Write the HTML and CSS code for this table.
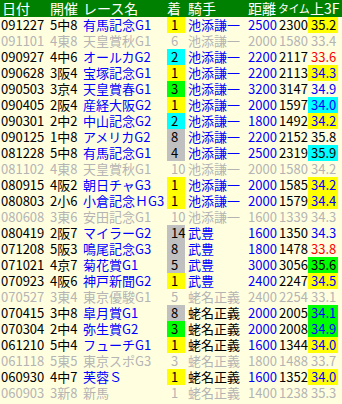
FILE: index.html
```html
<!DOCTYPE html>
<html lang="ja">
<head>
<meta charset="utf-8">
<link rel="stylesheet" href="styles.css">
</head>
<body>
<table class="results">
<colgroup>
<col class="c-date"><col class="c-kai"><col class="c-race"><col class="c-pos"><col class="c-jky"><col class="c-dist"><col class="c-time"><col class="c-f3"><col class="c-pad">
</colgroup>
<thead>
<tr><th class="t-date">日付</th><th class="t-kai">開催</th><th class="t-race">レース名</th><th class="t-pos">着</th><th class="t-jky">騎手</th><th class="t-dist">距離</th><th class="t-time">タイム</th><th class="t-f3">上3F</th><th></th></tr>
</thead>
<tbody>
<tr><td class="d">091227</td><td class="k">5中8</td><td class="r">有馬記念G1</td><td class="p bg-y">1</td><td class="j">池添謙一</td><td class="ds">2500</td><td class="tm">2300</td><td class="f bg-y">35.2</td><td></td></tr>
<tr class="off"><td class="d">091101</td><td class="k">4東8</td><td class="r">天皇賞秋G1</td><td class="p">6</td><td class="j">池添謙一</td><td class="ds">2000</td><td class="tm">1580</td><td class="f">33.4</td><td></td></tr>
<tr><td class="d">090927</td><td class="k">4中6</td><td class="r">オールカG2</td><td class="p bg-c">2</td><td class="j">池添謙一</td><td class="ds">2200</td><td class="tm">2117</td><td class="f red">33.6</td><td></td></tr>
<tr><td class="d">090628</td><td class="k">3阪4</td><td class="r">宝塚記念G1</td><td class="p bg-y">1</td><td class="j">池添謙一</td><td class="ds">2200</td><td class="tm">2113</td><td class="f bg-y blue">34.3</td><td></td></tr>
<tr><td class="d">090503</td><td class="k">3京4</td><td class="r">天皇賞春G1</td><td class="p bg-l">3</td><td class="j">池添謙一</td><td class="ds">3200</td><td class="tm">3147</td><td class="f blue">34.9</td><td></td></tr>
<tr><td class="d">090405</td><td class="k">2阪4</td><td class="r">産経大阪G2</td><td class="p bg-y">1</td><td class="j">池添謙一</td><td class="ds">2000</td><td class="tm">1597</td><td class="f bg-c blue">34.0</td><td></td></tr>
<tr><td class="d">090301</td><td class="k">2中2</td><td class="r">中山記念G2</td><td class="p bg-c">2</td><td class="j">池添謙一</td><td class="ds">1800</td><td class="tm">1492</td><td class="f bg-y blue">34.2</td><td></td></tr>
<tr><td class="d">090125</td><td class="k">1中8</td><td class="r">アメリカG2</td><td class="p bg-s">8</td><td class="j">池添謙一</td><td class="ds">2200</td><td class="tm">2152</td><td class="f">35.8</td><td></td></tr>
<tr><td class="d">081228</td><td class="k">5中8</td><td class="r">有馬記念G1</td><td class="p bg-s">4</td><td class="j">池添謙一</td><td class="ds">2500</td><td class="tm">2319</td><td class="f bg-c">35.9</td><td></td></tr>
<tr class="off"><td class="d">081102</td><td class="k">4東8</td><td class="r">天皇賞秋G1</td><td class="p">10</td><td class="j">池添謙一</td><td class="ds">2000</td><td class="tm">1580</td><td class="f">34.2</td><td></td></tr>
<tr><td class="d">080915</td><td class="k">4阪2</td><td class="r">朝日チャG3</td><td class="p bg-y">1</td><td class="j">池添謙一</td><td class="ds">2000</td><td class="tm">1585</td><td class="f bg-y blue">34.2</td><td></td></tr>
<tr><td class="d">080803</td><td class="k">2小6</td><td class="r">小倉記念ＨG3</td><td class="p bg-y">1</td><td class="j">池添謙一</td><td class="ds">2000</td><td class="tm">1579</td><td class="f bg-y blue">34.4</td><td></td></tr>
<tr class="off"><td class="d">080608</td><td class="k">3東6</td><td class="r">安田記念G1</td><td class="p">10</td><td class="j">池添謙一</td><td class="ds">1600</td><td class="tm">1339</td><td class="f">34.3</td><td></td></tr>
<tr><td class="d">080419</td><td class="k">2阪7</td><td class="r">マイラーG2</td><td class="p bg-s">14</td><td class="j">武豊</td><td class="ds">1600</td><td class="tm">1350</td><td class="f blue">34.3</td><td></td></tr>
<tr><td class="d">071208</td><td class="k">5阪3</td><td class="r">鳴尾記念G3</td><td class="p bg-s">8</td><td class="j">武豊</td><td class="ds">1800</td><td class="tm">1478</td><td class="f red">33.8</td><td></td></tr>
<tr><td class="d">071021</td><td class="k">4京7</td><td class="r">菊花賞G1</td><td class="p bg-s">5</td><td class="j">武豊</td><td class="ds">3000</td><td class="tm">3056</td><td class="f bg-l">35.6</td><td></td></tr>
<tr><td class="d">070923</td><td class="k">4阪6</td><td class="r">神戸新聞G2</td><td class="p bg-y">1</td><td class="j">武豊</td><td class="ds">2400</td><td class="tm">2247</td><td class="f bg-y blue">34.5</td><td></td></tr>
<tr class="off"><td class="d">070527</td><td class="k">3東4</td><td class="r">東京優駿G1</td><td class="p">5</td><td class="j">蛯名正義</td><td class="ds">2400</td><td class="tm">2254</td><td class="f">33.1</td><td></td></tr>
<tr><td class="d">070415</td><td class="k">3中8</td><td class="r">皐月賞G1</td><td class="p bg-s">8</td><td class="j blk">蛯名正義</td><td class="ds">2000</td><td class="tm">2005</td><td class="f bg-l blue">34.1</td><td></td></tr>
<tr><td class="d">070304</td><td class="k">2中4</td><td class="r">弥生賞G2</td><td class="p bg-l">3</td><td class="j blk">蛯名正義</td><td class="ds">2000</td><td class="tm">2008</td><td class="f bg-l blue">34.9</td><td></td></tr>
<tr><td class="d">061210</td><td class="k">5中4</td><td class="r">フューチG1</td><td class="p bg-y">1</td><td class="j blk">蛯名正義</td><td class="ds">1600</td><td class="tm">1344</td><td class="f bg-y blue">34.0</td><td></td></tr>
<tr class="off"><td class="d">061118</td><td class="k">5東5</td><td class="r">東京スポG3</td><td class="p">3</td><td class="j">蛯名正義</td><td class="ds">1800</td><td class="tm">1488</td><td class="f">33.7</td><td></td></tr>
<tr><td class="d">060930</td><td class="k">4中7</td><td class="r">芙蓉Ｓ</td><td class="p bg-y">1</td><td class="j blk">蛯名正義</td><td class="ds">1600</td><td class="tm">1352</td><td class="f bg-y blue">34.0</td><td></td></tr>
<tr class="off"><td class="d">060903</td><td class="k">3新8</td><td class="r">新馬</td><td class="p">1</td><td class="j">蛯名正義</td><td class="ds">1400</td><td class="tm">1238</td><td class="f">35.3</td><td></td></tr>
</tbody>
</table>
</body>
</html>
```

FILE: styles.css
```css
html, body {
  margin: 0;
  padding: 0;
  background: #ffffe0;
}
.results {
  border-collapse: collapse;
  table-layout: fixed;
  width: 342px;
  font-family: "Noto Sans CJK JP", sans-serif;
  font-size: 13px;
  background: #ffffe0;
}
.c-date { width: 48px; }
.c-kai { width: 34px; }
.c-race { width: 85px; }
.c-pos { width: 18px; }
.c-jky { width: 62px; }
.c-dist { width: 30px; }
.c-time { width: 31px; }
.c-f3 { width: 30px; }
.c-pad { width: 4px; }

.results th {
  background: #008000;
  color: #ffffff;
  font-weight: normal;
  font-size: 14px;
  height: 17px;
  line-height: 17px;
  padding: 0;
  text-align: left;
  white-space: nowrap;
}
.results th.t-date { padding-left: 2px; }
.results th.t-kai { padding-left: 2px; }
.results th.t-race { padding-left: 1px; }
.results th.t-pos { padding-left: 0; }
.results th.t-jky { padding-left: 3px; }
.results th.t-dist { padding-left: 1px; }
.results th.t-time { padding-left: 1px; font-size: 11px; letter-spacing: -0.5px; }
.results th.t-f3 { padding-left: 2px; }

.results td {
  height: 16px;
  line-height: 16px;
  padding: 0;
  white-space: nowrap;
  color: #000;
}
.results td.d { padding-left: 1px; }
.results td.k { padding-left: 2px; }
.results td.r { padding-left: 1px; color: #0000ff; }
.results td.p { padding-left: 4px; }
.results td.j { padding-left: 3px; color: #0000ff; }
.results td.j.blk { color: #000; }
.results td.ds { padding-left: 1px; color: #0000ff; }
.results td.tm { padding-left: 2px; }
.results td.f { padding-left: 3px; }
.results td.blue { color: #0000ff; }
.results td.red { color: #ff0000; }

.bg-y { background: #ffff00; }
.bg-c { background: #00ffff; }
.bg-l { background: #00ff00; }
.bg-s { background: #c0c0c0; }

.results tr.off td { color: #b4b4b4; background: transparent; }
```
